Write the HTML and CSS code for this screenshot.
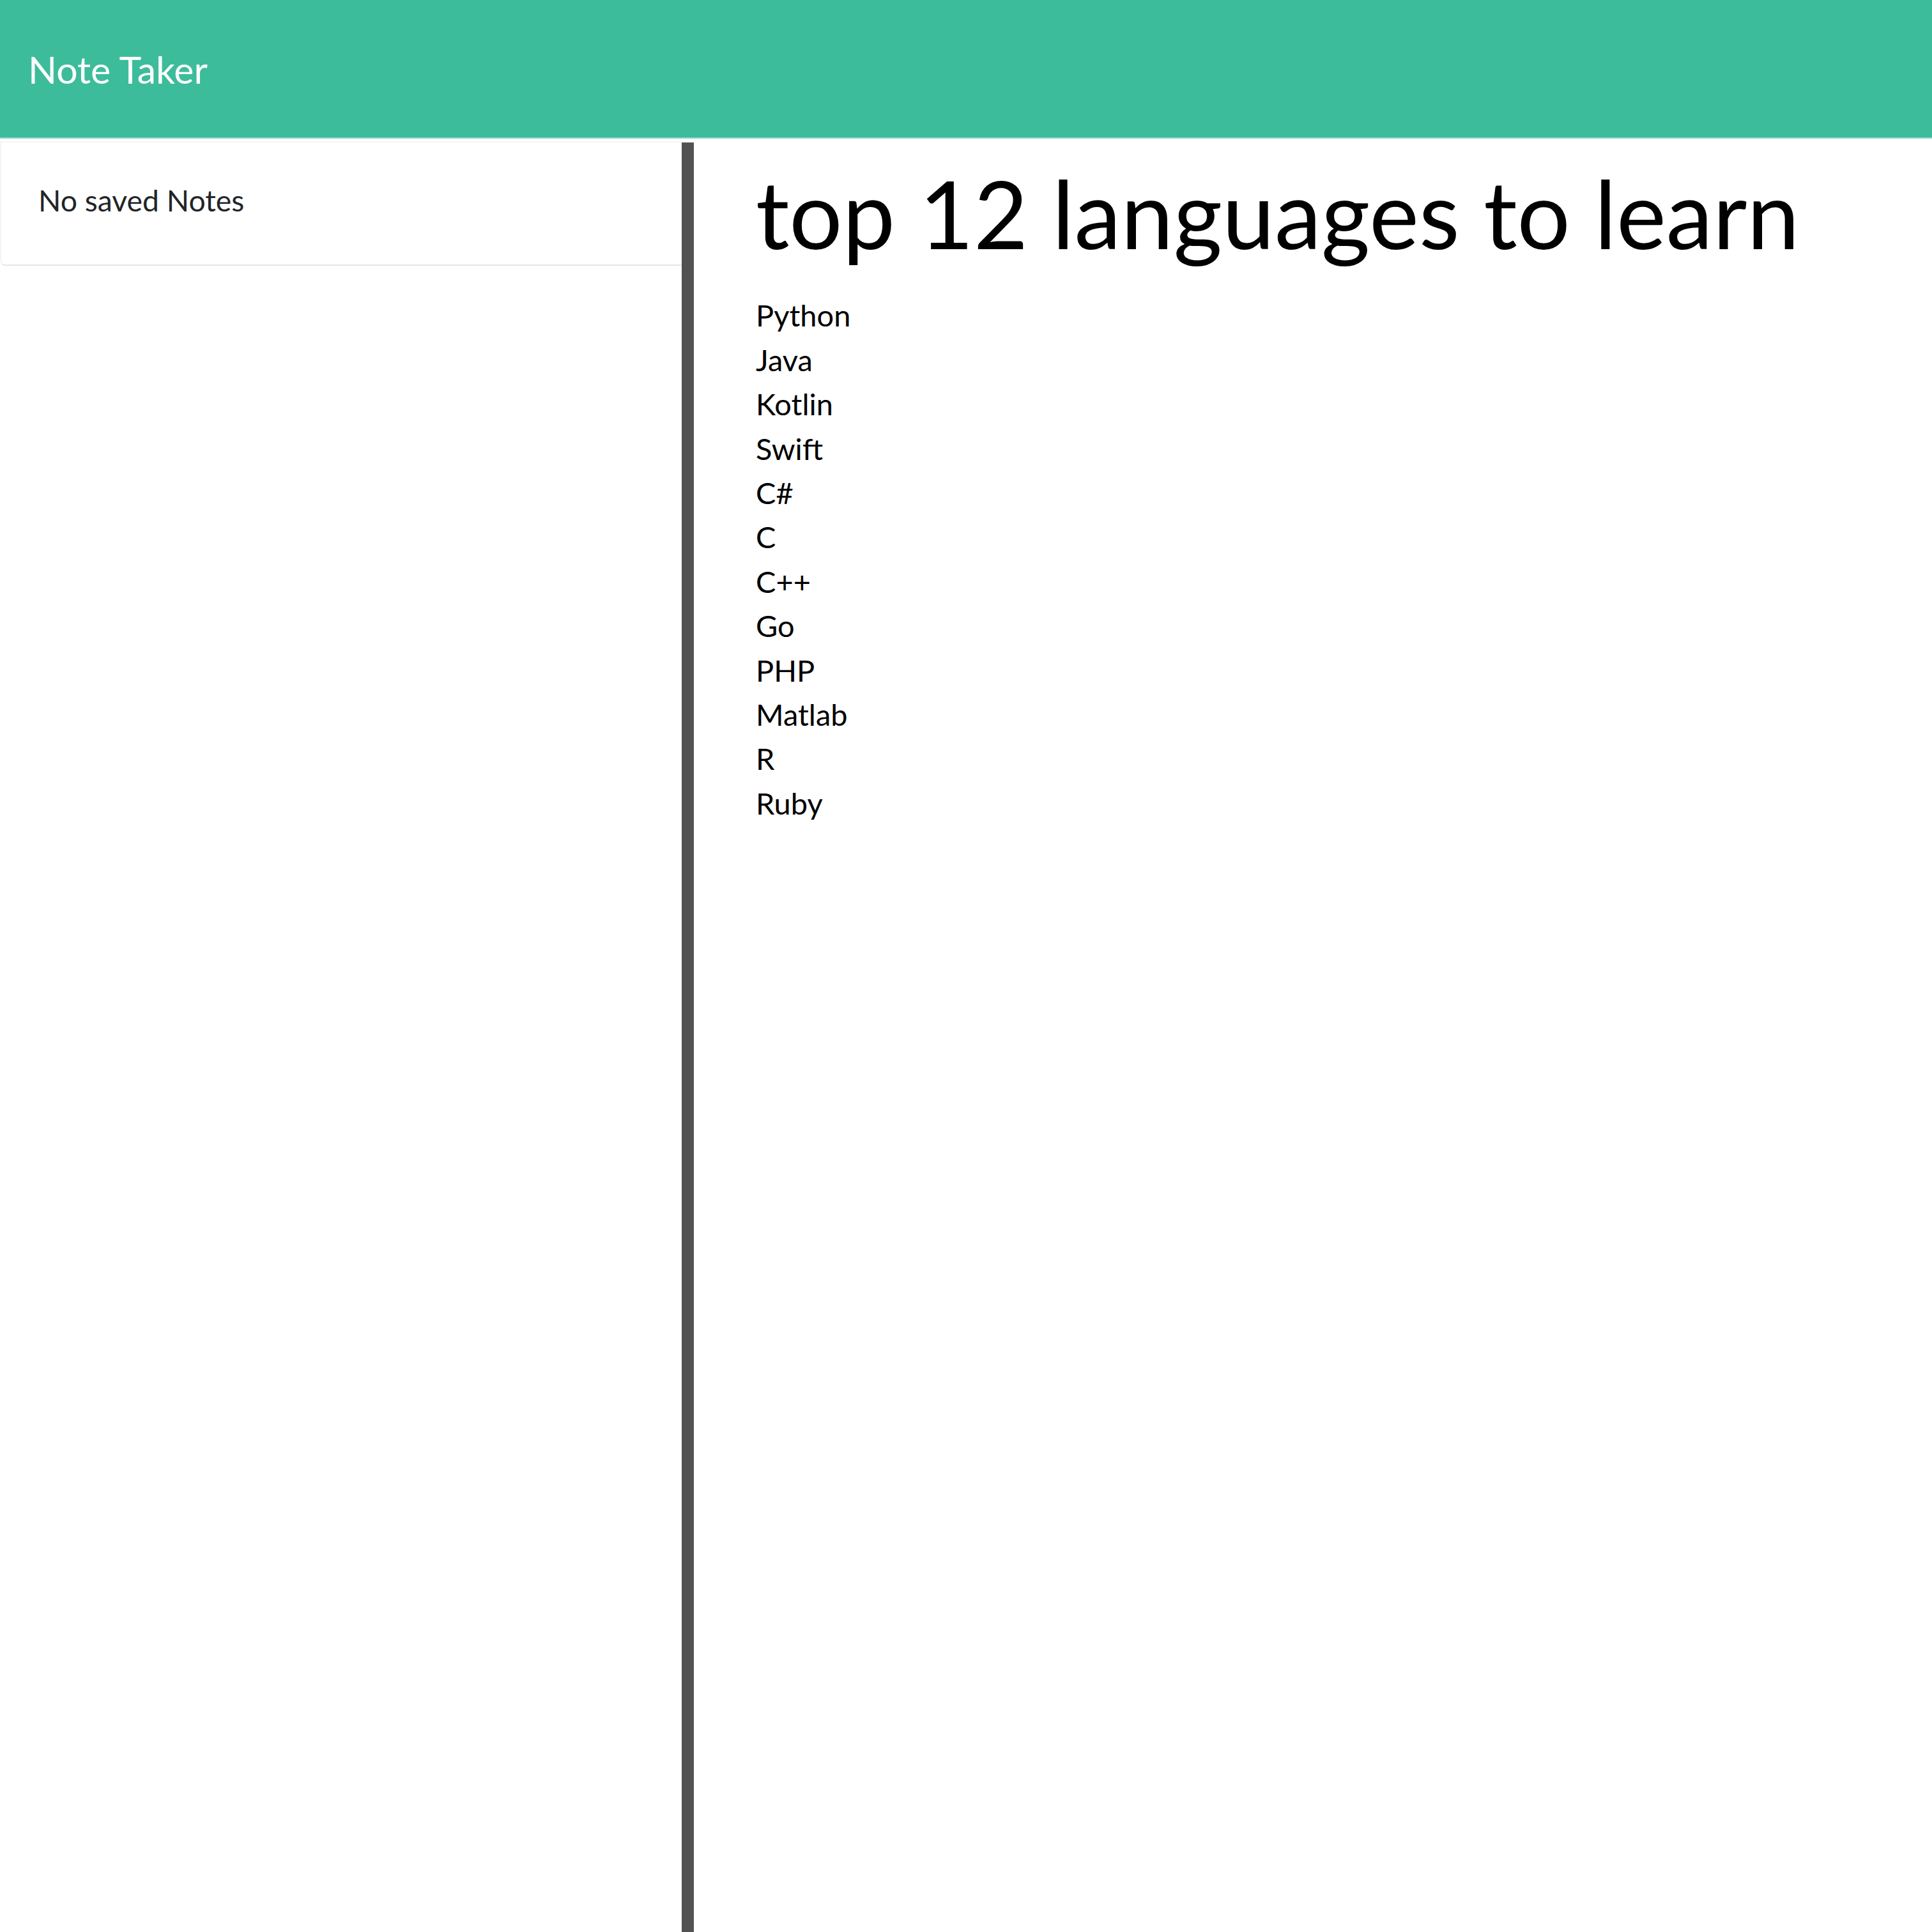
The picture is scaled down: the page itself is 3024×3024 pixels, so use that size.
FILE: index.html
```html
<!DOCTYPE html>
<html>
<head>
<meta charset="utf-8">
<link rel="stylesheet" href="styles.css">
<title>Note Taker</title>
</head>
<body>
<nav class="navbar"><span class="brand">Note Taker</span></nav>
<main class="container">
  <aside class="sidebar">
    <ul class="list-group">
      <li class="list-item">No saved Notes</li>
    </ul>
  </aside>
  <div class="divider"></div>
  <section class="editor">
    <h1 class="note-title">top 12 languages to learn</h1>
    <div class="note-text">
      <div>Python</div>
      <div>Java</div>
      <div>Kotlin</div>
      <div>Swift</div>
      <div>C#</div>
      <div>C</div>
      <div>C++</div>
      <div>Go</div>
      <div>PHP</div>
      <div>Matlab</div>
      <div>R</div>
      <div>Ruby</div>
    </div>
  </section>
</main>
</body>
</html>
```
FILE: styles.css
```css
html, body {
  margin: 0;
  padding: 0;
  height: 100%;
}
body {
  font-family: Lato, "Open Sans", sans-serif;
  color: #212529;
  background: #ffffff;
}
.navbar {
  height: 217px;
  background: #3dbc9b;
  display: flex;
  align-items: center;
  padding-left: 44px;
  box-sizing: border-box;
  border-bottom: 2px solid #8fd8c4;
}
.brand {
  color: #ffffff;
  font-size: 59px;
  line-height: 1;
  margin-top: 2px;
}
.container {
  display: flex;
  padding-top: 4px;
  min-height: calc(100% - 221px);
}
.sidebar {
  width: 1067px;
  flex: none;
}
.list-group {
  list-style: none;
  margin: 0;
  padding: 0;
}
.list-item {
  font-size: 46.3px;
  line-height: 1.5;
  padding: 56px 55px 66px 58px;
  border: 2px solid #e6e6e6;
  border-top-color: #f7f7f7;
  border-left-color: #f4f4f4;
  border-right: none;
  border-radius: 0 0 0 8px;
}
.divider {
  width: 19px;
  flex: none;
  background: #525254;
  margin-top: 2px;
}
.editor {
  flex: 1;
  padding-left: 97px;
  padding-top: 24px;
}
.note-title {
  margin: 0;
  font-weight: 400;
  font-size: 147px;
  line-height: 1.2;
  color: #000000;
}
.note-text {
  margin-top: 38px;
  font-size: 47px;
  line-height: 69.4px;
  color: #000000;
}
```
